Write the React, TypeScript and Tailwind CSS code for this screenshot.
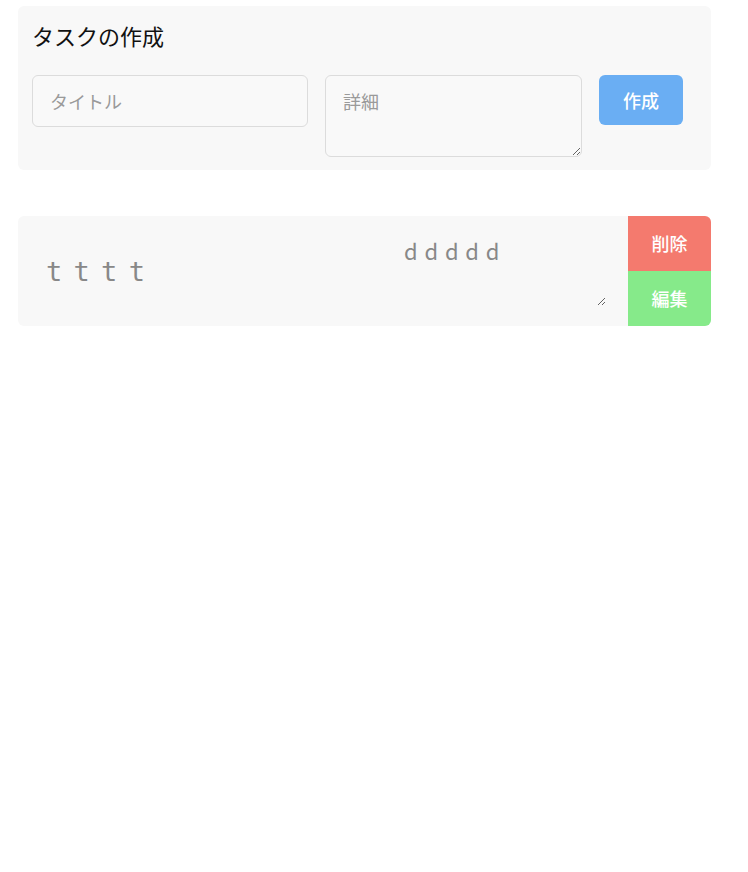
import React from 'react';

const jp = "font-['Noto_Sans_CJK_JP','Noto_Sans',sans-serif]";
const mono = "font-['DejaVu_Sans_Mono',monospace]";

const App: React.FC = () => {
  return (
    <div className={`min-h-screen bg-white pl-[18px] pr-[37px] pt-[6px] ${jp}`}>
      {/* Create form */}
      <section className="rounded-md bg-[#f8f8f8] pl-[14px] pr-[14px] pt-[16px] pb-[13px]">
        <h2 className="text-[22px] leading-[26px] text-[#111]">タスクの作成</h2>
        <div className="mt-[27px] flex items-start gap-[17px]">
          <input
            type="text"
            placeholder="タイトル"
            className={`h-[52px] w-[276px] rounded-md border border-[#dcdcdc] bg-[#f9f9f9] px-[17px] text-[18px] outline-none placeholder:text-[#9a9a9a] ${jp}`}
          />
          <textarea
            placeholder="詳細"
            className={`h-[82px] w-[257px] rounded-md border border-[#dcdcdc] bg-[#f9f9f9] px-[17px] py-[12px] text-[18px] leading-[26px] outline-none placeholder:text-[#9a9a9a] ${jp}`}
          />
          <button className="h-[50px] w-[84px] rounded-md bg-[#6aaef3] text-[18px] font-medium text-white">
            作成
          </button>
        </div>
      </section>

      {/* Task list */}
      <ul className="mt-[46px]">
        <li className="flex h-[110px] overflow-hidden rounded-md bg-[#f8f8f8]">
          <input
            type="text"
            readOnly
            defaultValue="tttt"
            className={`h-full min-w-0 flex-1 bg-transparent pl-[28px] text-[27px] tracking-[11.3px] text-[#888] outline-none ${mono}`}
          />
          <textarea
            readOnly
            defaultValue="ddddd"
            className={`mt-[16px] mr-[22px] h-[74px] w-[218px] bg-transparent px-[16px] py-[4px] text-[22px] leading-[28px] tracking-[6.8px] text-[#888] outline-none ${jp}`}
          />
          <div className="flex w-[83px] flex-col">
            <button className="h-[55px] bg-[#f47a6e] text-[18px] font-medium text-white">削除</button>
            <button className="h-[55px] bg-[#86ea8a] text-[18px] font-medium text-white">編集</button>
          </div>
        </li>
      </ul>
    </div>
  );
};

export default App;
